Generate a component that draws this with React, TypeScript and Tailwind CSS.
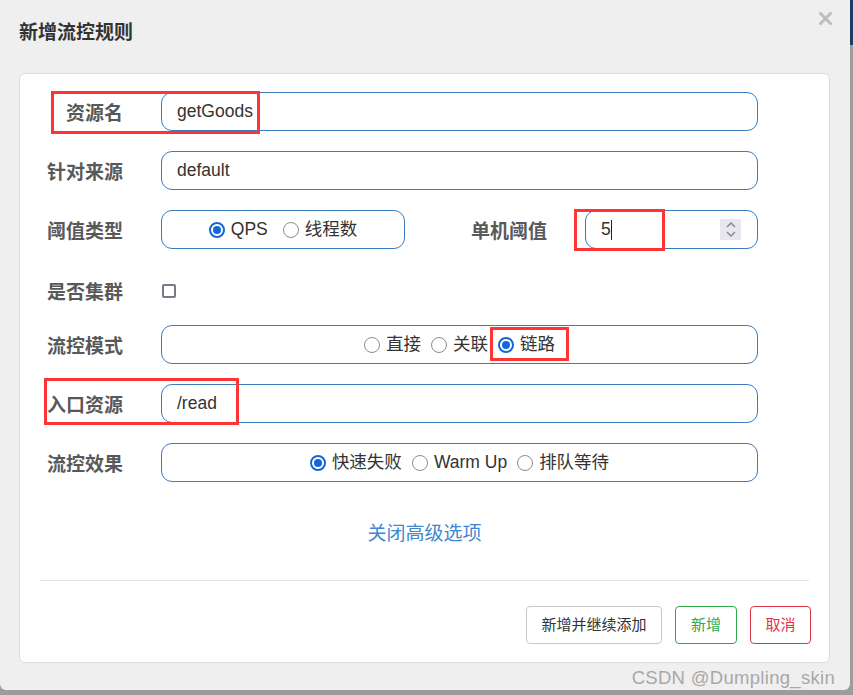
import { ReactNode } from 'react';

const FONT = { fontFamily: '"Liberation Sans", "Noto Sans CJK SC", sans-serif' };

function Label({ children, width = 'w-[76px]' }: { children: ReactNode; width?: string }) {
  return (
    <div className={`${width} shrink-0 text-right text-[19px] font-bold text-[#595959] leading-none pt-[3px]`}>
      {children}
    </div>
  );
}

function Radio({ checked, label }: { checked?: boolean; label: string }) {
  return (
    <div className="flex items-center gap-[6px]">
      {checked ? (
        <span className="w-[16px] h-[16px] shrink-0 rounded-full border-[2px] border-[#1467d8] flex items-center justify-center">
          <span className="w-[8px] h-[8px] rounded-full bg-[#1467d8]" />
        </span>
      ) : (
        <span className="w-[16px] h-[16px] shrink-0 rounded-full border-[1.5px] border-[#8c8c96] bg-white" />
      )}
      <span className="text-[17.5px] text-[#333]">{label}</span>
    </div>
  );
}

function Box({ children, width = 'w-[597px]', center }: { children?: ReactNode; width?: string; center?: boolean }) {
  return (
    <div
      className={`${width} h-[39px] ml-[38px] border border-[#3b7cc0] rounded-[11px] bg-white flex items-center ${
        center ? 'justify-center' : 'pl-[15px]'
      } text-[17.5px] text-[#333]`}
    >
      {children}
    </div>
  );
}

export default function App() {
  return (
    <div className="relative w-[853px] h-[695px] bg-[#9c9c9c] overflow-hidden" style={FONT}>
      <div className="flex">
        <div className="w-[850px] h-[690px] bg-[#efefef] rounded-b-md flex flex-col">
          {/* header */}
          <div className="flex items-start justify-between pt-[19px] pl-[19px] pr-[18px] h-[73px] shrink-0">
            <h1 className="text-[19px] font-bold text-[#333] leading-[28px]">新增流控规则</h1>
            <svg width="13" height="13" viewBox="0 0 13 13" className="mt-[-7px]">
              <path d="M1.5 1.5 L11.5 11.5 M11.5 1.5 L1.5 11.5" stroke="#bdbdbd" strokeWidth="3" strokeLinecap="square" />
            </svg>
          </div>

          {/* card */}
          <div className="ml-[19px] w-[811px] shrink-0 bg-white border border-[#dcdcdc] rounded-md pt-[18px] pb-[18px]">
            <div className="flex items-center pl-[27px]">
              <Label>资源名</Label>
              <Box>getGoods</Box>
            </div>

            <div className="flex items-center pl-[27px] mt-[20px]">
              <Label>针对来源</Label>
              <Box>default</Box>
            </div>

            <div className="flex items-center pl-[27px] mt-[20px]">
              <Label>阈值类型</Label>
              <Box width="w-[244px]" center>
                <div className="flex items-center gap-[15px]">
                  <Radio checked label="QPS" />
                  <Radio label="线程数" />
                </div>
              </Box>
              <div className="ml-[65px]">
                <Label width="w-[77px]">单机阈值</Label>
              </div>
              <div className="w-[173px] h-[39px] ml-[38px] border border-[#3b7cc0] rounded-[11px] bg-white flex items-center pl-[15px] pr-[16px]">
                <span className="text-[17.5px] text-[#333]">5</span>
                <span className="w-px h-[20px] bg-[#222]" />
                <div className="ml-auto w-[21px] h-[21px] bg-[#e7e7ed] flex flex-col items-center justify-center gap-[3px]">
                  <svg width="10" height="6" viewBox="0 0 10 6">
                    <path d="M1 5 L5 1 L9 5" fill="none" stroke="#8a8a94" strokeWidth="1.5" />
                  </svg>
                  <svg width="10" height="6" viewBox="0 0 10 6">
                    <path d="M1 1 L5 5 L9 1" fill="none" stroke="#8a8a94" strokeWidth="1.5" />
                  </svg>
                </div>
              </div>
            </div>

            <div className="flex items-center pl-[27px] mt-[22px] h-[39px]">
              <Label>是否集群</Label>
              <span className="ml-[39px] w-[14px] h-[14px] border-[2px] border-[#7a7a86] rounded-[2px] bg-white" />
            </div>

            <div className="flex items-center pl-[27px] mt-[15px]">
              <Label>流控模式</Label>
              <Box center>
                <div className="flex items-center gap-[10px]">
                  <Radio label="直接" />
                  <Radio label="关联" />
                  <Radio checked label="链路" />
                </div>
              </Box>
            </div>

            <div className="flex items-center pl-[27px] mt-[20px]">
              <Label>入口资源</Label>
              <Box>/read</Box>
            </div>

            <div className="flex items-center pl-[27px] mt-[20px]">
              <Label>流控效果</Label>
              <Box center>
                <div className="flex items-center gap-[10px]">
                  <Radio checked label="快速失败" />
                  <Radio label="Warm Up" />
                  <Radio label="排队等待" />
                </div>
              </Box>
            </div>

            <div className="mt-[38px] text-center text-[19px] leading-[28px] text-[#3f88cf]">关闭高级选项</div>

            <div className="mx-[20px] mt-[32px] h-px bg-[#e3e3e3]" />

            <div className="flex justify-end gap-[13px] mt-[25px] pr-[18px]">
              <button className="w-[136px] h-[38px] border border-[#c8c8c8] rounded-[4px] text-[15px] text-[#333] bg-white">
                新增并继续添加
              </button>
              <button className="w-[62px] h-[38px] border border-[#2ea84a] rounded-[4px] text-[15px] text-[#2ea84a] bg-white">
                新增
              </button>
              <button className="w-[61px] h-[38px] border border-[#dc3545] rounded-[4px] text-[15px] text-[#dc3545] bg-white">
                取消
              </button>
            </div>
          </div>

          <div className="flex justify-end pr-[15px] mt-px">
            <span className="text-[18.5px] text-[#a8a8a8] tracking-[0.3px]">CSDN @Dumpling_skin</span>
          </div>
        </div>
        <div className="w-[3px] flex flex-col">
          <div className="h-[45px] bg-[#1d3d62]" />
        </div>
      </div>

      {/* red annotation boxes */}
      <div className="absolute left-[51px] top-[91px] w-[209px] h-[43px] border-[3px] border-[#ff3535]" />
      <div className="absolute left-[574px] top-[209px] w-[91px] h-[42px] border-[3px] border-[#ff3535]" />
      <div className="absolute left-[490px] top-[327px] w-[79px] h-[34px] border-[3px] border-[#ff3535]" />
      <div className="absolute left-[44px] top-[378px] w-[195px] h-[47px] border-[3px] border-[#ff3535]" />
    </div>
  );
}
